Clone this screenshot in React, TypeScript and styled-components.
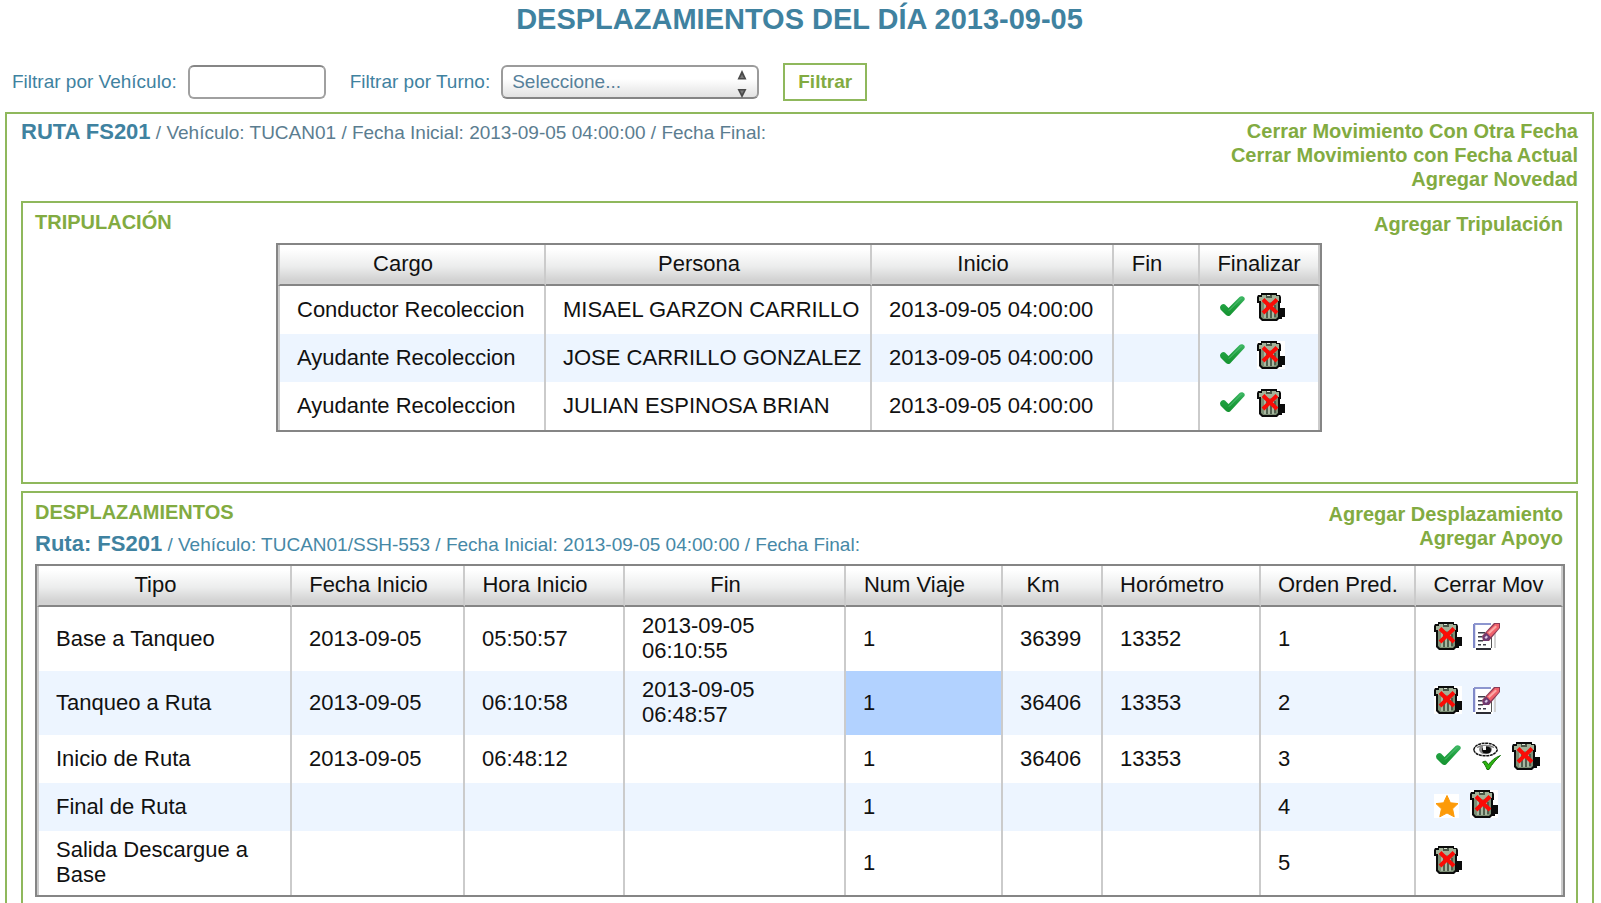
import React from "react";
import styled, { createGlobalStyle, css } from "styled-components";

const GREEN = "#82ab41";
const BLUE = "#3f82a0";

const GlobalStyle = createGlobalStyle`
  * { box-sizing: border-box; }
  html { scrollbar-width: none; }
  body {
    margin: 0;
    background: #fff;
    font-family: "Liberation Sans", Arial, Helvetica, sans-serif;
  }
`;

const Page = styled.main`
  padding: 2px 7px 16px 5px;
`;

const Title = styled.h1`
  margin: 0;
  color: ${BLUE};
  font-size: 29px;
  line-height: 34px;
  text-align: center;
`;

const Filters = styled.form`
  display: flex;
  align-items: center;
  gap: 24px;
  margin: 27px 0 11px;
  padding-left: 7px;
  color: ${BLUE};
  font-size: 19px;
  line-height: 24px;
`;

const Field = styled.div`
  display: flex;
  align-items: center;
  gap: 11px;
`;

const TextInput = styled.input`
  width: 138px;
  height: 34px;
  padding: 0 8px;
  border: 2px solid #a0a0a0;
  border-top-color: #868686;
  border-radius: 6px;
  background: #fff;
  color: #4f7d94;
  font: inherit;
`;

const SelectWrap = styled.div`
  position: relative;
  display: flex;
`;

const Select = styled.select`
  appearance: none;
  width: 258px;
  height: 34px;
  padding: 0 32px 0 9px;
  border: 2px solid #9b9b9b;
  border-bottom-color: #858585;
  border-radius: 6px;
  background: linear-gradient(#fff 40%, #e2e2e2);
  color: #56809a;
  font: inherit;
`;

const SelectArrows = styled.svg`
  position: absolute;
  top: 5px;
  right: 12px;
  pointer-events: none;
`;

const FilterButton = styled.button`
  width: 84px;
  height: 38px;
  padding: 0;
  border: 2px solid #8fb85c;
  background: #fff;
  color: ${GREEN};
  font: inherit;
  font-weight: bold;
`;

const frame = css`
  border: 2px solid #8fb85c;
`;

const RoutePanel = styled.section`
  ${frame}
  padding: 5px 14px 12px 14px;
`;

const Panel = styled.section<{ $bottom: number }>`
  ${frame}
  padding: 7px 13px ${(p) => p.$bottom}px 12px;
  & + & {
    margin-top: 7px;
  }
`;

const PanelHeader = styled.header<{ $gap: number }>`
  display: flex;
  justify-content: space-between;
  align-items: flex-start;
  margin-bottom: ${(p) => p.$gap}px;
`;

const PanelTitle = styled.h2`
  margin: 0;
  color: ${GREEN};
  font-size: 20px;
  line-height: 24px;
`;

const RouteLine = styled.p<{ $muted?: boolean; $top?: number }>`
  margin: ${(p) => p.$top ?? 0}px 0 0;
  color: ${(p) => (p.$muted ? "#5b7d90" : "#4688a6")};
  font-size: 19px;
  line-height: 26px;
  strong {
    color: ${BLUE};
    font-size: 22px;
  }
`;

const Actions = styled.nav<{ $top?: number }>`
  display: flex;
  flex-direction: column;
  align-items: flex-end;
  padding-top: ${(p) => p.$top ?? 0}px;
`;

const ActionLink = styled.a`
  color: ${GREEN};
  font-size: 20px;
  font-weight: bold;
  line-height: 24px;
  text-decoration: none;
`;

const Table = styled.table<{ $width?: number }>`
  width: ${(p) => (p.$width ? `${p.$width}px` : "100%")};
  max-width: 100%;
  margin: 0 auto;
  table-layout: fixed;
  border: 2px solid #858585;
  border-collapse: separate;
  border-spacing: 0;
  color: #111;
  font-size: 22px;
  line-height: 25px;
`;

const HeadCell = styled.th<{ $sortable: boolean }>`
  height: 41px;
  padding: 0 ${(p) => (p.$sortable ? 35 : 17)}px 2px 17px;
  border-right: 2px solid #cbcbcb;
  border-bottom: 2px solid #858585;
  background: linear-gradient(#fff 10%, #eceded 55%, #d2d2d2 90%);
  font-weight: normal;
  white-space: nowrap;
  text-align: center;
  &:first-child {
    border-left: 2px solid #cbcbcb;
  }
`;

const Row = styled.tr`
  background: #fff;
  &:nth-child(even) {
    background: #edf5ff;
  }
`;

const Cell = styled.td<{ $selected?: boolean }>`
  height: 48px;
  padding: 6px 0 8px 17px;
  border-right: 2px solid #cbcbcb;
  vertical-align: middle;
  white-space: nowrap;
  background: ${(p) => (p.$selected ? "#b2d2ff" : "transparent")};
  &:first-child {
    border-left: 2px solid #cbcbcb;
  }
`;

const IconCell = styled(Cell)`
  padding: 0 0 6px 18px;
`;

const IconRow = styled.div`
  display: flex;
  align-items: flex-end;
  gap: 11px;
`;

const IconButton = styled.button`
  display: block;
  padding: 0;
  border: 0;
  background: none;
  svg {
    display: block;
  }
`;

const TrashIcon = () => (
  <svg width="28" height="28" viewBox="0 0 28 28">
    <rect width="28" height="28" fill="#fff" />
    <path d="M21 15h7v9h-3v2h-4z" fill="#0b0b0b" />
    <path d="M2 7h21v18l-3 3H5l-3-3z" fill="#0b0b0b" />
    <path d="M4 8h17v16l-2 2H6l-2-2z" fill="#7d8f75" />
    <path d="M7 11h2v14H7zM11 11h2v14h-2zM15 11h2v14h-2z" fill="#a9b8a1" />
    <path d="M9.500 12h1v13h-1zM13.500 12h1v13h-1zM17.500 12h1v12h-1z" fill="#27332a" />
    <path d="M4 0h16v2h3l1 2v6h-3V8H3v2H0V4l1-2h3z" fill="#0b0b0b" />
    <path d="M5 2h14v1h3v5h-2v1H4V8H2V4h3z" fill="#a3b298" />
    <path d="M9 2h6v3H9z" fill="#4a5747" />
    <path d="M10 2h3v1h-3z" fill="#dde4d6" />
    <path d="M6 6.500L20 20M20 6.500L6 20" stroke="#fb0b06" strokeWidth="4" />
  </svg>
);

const CheckIcon = () => (
  <svg width="28" height="28" viewBox="0 0 28 28">
    <defs>
      <linearGradient id="tick" x1="0" y1="0" x2="0" y2="1">
        <stop offset="0" stopColor="#3fb866" />
        <stop offset="0.5" stopColor="#1fa03f" />
        <stop offset="1" stopColor="#169331" />
      </linearGradient>
    </defs>
    <path
      d="M2 14.500C2 12 5.500 10 7 11.500l3.500 3.500L21.500 4c2-2 6.500 0 5 3L13 21.500c-1.500 2-3.500 2-5 .5L2.500 16.500z"
      fill="url(#tick)"
    />
    <path d="M11 17.500L23.500 5" stroke="#55c078" strokeWidth="1" fill="none" />
  </svg>
);

const EditIcon = () => (
  <svg width="28" height="28" viewBox="0 0 28 28">
    <path d="M0 1h20v27H0z" fill="#fff" />
    <path d="M0 2h2v24H0z" fill="#7f88c8" />
    <path d="M1 1h17v2H1z" fill="#8d96cf" />
    <path d="M2 3h1v23H2z" fill="#dfe2f3" />
    <path d="M18 14h1v12h-1z" fill="#555" />
    <path d="M21 8h2v18h-2z" fill="#d2d2d2" />
    <path d="M3 26h15v2H3z" fill="#2c2c34" />
    <path d="M5 10h7v1.500H5zM5 14h4v1.500H5zM5 18h5v1.500H5zM5 22h3v1.500H5zM10 22h3v1.500h-3z" fill="#3d3d4a" />
    <path d="M9 14L21 1h6v5L16 19h-6z" fill="#8b3a55" />
    <path d="M13.500 10.500L22 2h4v4l-8.500 9z" fill="#f0616b" />
    <path d="M15 10.500l7.500-7 1.500 1.500-7.500 7z" fill="#fba9a6" />
    <path d="M9.500 15l3.500-4 5 4.500-3 3.500h-4z" fill="#6d3a72" />
    <path d="M11.500 15.500l2-2 1.500 1.500-2 2z" fill="#d9c8e4" />
  </svg>
);

const EyeCheckIcon = () => (
  <svg width="28" height="28" viewBox="0 0 28 28">
    <path d="M.8 8C1.500 3 7 1.200 12.500 1.200S23.500 3 24.200 8C23 12 18 13.800 12.500 13.800S2 12 .8 8z" fill="#fff" stroke="#111" strokeWidth="1.500" strokeDasharray="3 .6" />
    <path d="M4 5.500C8 2.800 17 2.800 21 5.500" stroke="#777" strokeWidth="1.500" fill="none" />
    <ellipse cx="12.500" cy="7.500" rx="6.500" ry="4.800" fill="#8b8b8b" />
    <ellipse cx="13.500" cy="8" rx="4.500" ry="3.500" fill="#0a0a0a" />
    <path d="M10 4h3v4h-3z" fill="#f5f5f5" />
    <path d="M9.500 20l3-1 3 3.500C18 19 22 15.500 27.500 13.500 23 17.500 19 22 16 27.500h-2C13 24.500 11.500 22 9.500 20z" fill="#2cb510" stroke="#15720a" strokeWidth="1" />
  </svg>
);

const StarIcon = () => (
  <svg width="25" height="24" viewBox="0 0 25 24">
    <rect width="25" height="24" fill="#fff" />
    <path
      d="M13 1.500l3.400 7.300 7.600.8-5.400 5.200 1.600 8L13 19l-7.200 3.800 1.600-8L2 9.600l7.600-.8z"
      fill="#fd9a08"
      stroke="#fd9a08"
      strokeLinejoin="round"
    />
  </svg>
);

const icons = {
  check: { label: "Finalizar", Icon: CheckIcon },
  trash: { label: "Eliminar", Icon: TrashIcon },
  edit: { label: "Editar", Icon: EditIcon },
  review: { label: "Revisar", Icon: EyeCheckIcon },
  star: { label: "Destacar", Icon: StarIcon },
};

type IconName = keyof typeof icons;

const IconActions = ({ names }: { names: IconName[] }) => (
  <IconRow>
    {names.map((name) => {
      const { label, Icon } = icons[name];
      return (
        <IconButton key={name} type="button" aria-label={label}>
          <Icon />
        </IconButton>
      );
    })}
  </IconRow>
);

type Column = { label: string; width: number };
type DataRow = { cells: string[]; actions: IconName[] };

const crewColumns: Column[] = [
  { label: "Cargo", width: 268 },
  { label: "Persona", width: 326 },
  { label: "Inicio", width: 242 },
  { label: "Fin", width: 86 },
  { label: "Finalizar", width: 120 },
];

const crewRows: DataRow[] = [
  { cells: ["Conductor Recoleccion", "MISAEL GARZON CARRILLO", "2013-09-05 04:00:00", ""], actions: ["check", "trash"] },
  { cells: ["Ayudante Recoleccion", "JOSE CARRILLO GONZALEZ", "2013-09-05 04:00:00", ""], actions: ["check", "trash"] },
  { cells: ["Ayudante Recoleccion", "JULIAN ESPINOSA BRIAN", "2013-09-05 04:00:00", ""], actions: ["check", "trash"] },
];

const tripColumns: Column[] = [
  { label: "Tipo", width: 255 },
  { label: "Fecha Inicio", width: 173 },
  { label: "Hora Inicio", width: 160 },
  { label: "Fin", width: 221 },
  { label: "Num Viaje", width: 157 },
  { label: "Km", width: 100 },
  { label: "Horómetro", width: 158 },
  { label: "Orden Pred.", width: 155 },
  { label: "Cerrar Mov", width: 147 },
];

const tripRows: DataRow[] = [
  { cells: ["Base a Tanqueo", "2013-09-05", "05:50:57", "2013-09-05\n06:10:55", "1", "36399", "13352", "1"], actions: ["trash", "edit"] },
  { cells: ["Tanqueo a Ruta", "2013-09-05", "06:10:58", "2013-09-05\n06:48:57", "1", "36406", "13353", "2"], actions: ["trash", "edit"] },
  { cells: ["Inicio de Ruta", "2013-09-05", "06:48:12", "", "1", "36406", "13353", "3"], actions: ["check", "review", "trash"] },
  { cells: ["Final de Ruta", "", "", "", "1", "", "", "4"], actions: ["star", "trash"] },
  { cells: ["Salida Descargue a\nBase", "", "", "", "1", "", "", "5"], actions: ["trash"] },
];

const Lines = ({ text }: { text: string }) => (
  <>
    {text.split("\n").map((line, i) => (
      <React.Fragment key={i}>
        {i > 0 && <br />}
        {line}
      </React.Fragment>
    ))}
  </>
);

type DataTableProps = {
  columns: Column[];
  rows: DataRow[];
  width?: number;
  selected?: [number, number];
};

const DataTable = ({ columns, rows, width, selected }: DataTableProps) => (
  <Table $width={width}>
    <colgroup>
      {columns.map((c) => (
        <col key={c.label} width={c.width} />
      ))}
    </colgroup>
    <thead>
      <tr>
        {columns.map((c, i) => (
          <HeadCell key={c.label} scope="col" $sortable={i < columns.length - 1}>
            {c.label}
          </HeadCell>
        ))}
      </tr>
    </thead>
    <tbody>
      {rows.map((row, r) => (
        <Row key={r}>
          {row.cells.map((text, c) => (
            <Cell key={c} $selected={selected?.[0] === r && selected?.[1] === c}>
              <Lines text={text} />
            </Cell>
          ))}
          <IconCell>
            <IconActions names={row.actions} />
          </IconCell>
        </Row>
      ))}
    </tbody>
  </Table>
);

export default function App() {
  return (
    <>
      <GlobalStyle />
      <Page>
        <Title>DESPLAZAMIENTOS DEL DÍA 2013-09-05</Title>
        <Filters onSubmit={(e) => e.preventDefault()}>
          <Field>
            <label htmlFor="vehiculo">Filtrar por Vehículo:</label>
            <TextInput id="vehiculo" type="text" />
          </Field>
          <Field>
            <label htmlFor="turno">Filtrar por Turno:</label>
            <SelectWrap>
              <Select id="turno">
                <option>Seleccione...</option>
              </Select>
              <SelectArrows width="10" height="28" viewBox="0 0 10 28">
                <path d="M5 0l4.500 9.500h-9z" fill="#4a4a4a" />
                <path d="M5 28L.5 19h9z" fill="#4a4a4a" />
                <path d="M5 4.500l2 3.500H3zM5 24l-2-3.500h4z" fill="#7a7a7a" />
              </SelectArrows>
            </SelectWrap>
          </Field>
          <FilterButton type="submit">Filtrar</FilterButton>
        </Filters>

        <RoutePanel>
          <PanelHeader $gap={10}>
            <RouteLine $muted>
              <strong>RUTA FS201</strong> / Vehículo: TUCAN01 / Fecha Inicial: 2013-09-05 04:00:00 / Fecha Final:
            </RouteLine>
            <Actions>
              <ActionLink href="#cerrar-otra">Cerrar Movimiento Con Otra Fecha</ActionLink>
              <ActionLink href="#cerrar-actual">Cerrar Movimiento con Fecha Actual</ActionLink>
              <ActionLink href="#novedad">Agregar Novedad</ActionLink>
            </Actions>
          </PanelHeader>

          <Panel $bottom={50}>
            <PanelHeader $gap={7}>
              <PanelTitle>TRIPULACIÓN</PanelTitle>
              <Actions $top={2}>
                <ActionLink href="#tripulacion">Agregar Tripulación</ActionLink>
              </Actions>
            </PanelHeader>
            <DataTable columns={crewColumns} rows={crewRows} width={1045} />
          </Panel>

          <Panel $bottom={12}>
            <PanelHeader $gap={6}>
              <div>
                <PanelTitle>DESPLAZAMIENTOS</PanelTitle>
                <RouteLine $top={7}>
                  <strong>Ruta: FS201</strong> / Vehículo: TUCAN01/SSH-553 / Fecha Inicial: 2013-09-05 04:00:00 / Fecha Final:
                </RouteLine>
              </div>
              <Actions $top={2}>
                <ActionLink href="#desplazamiento">Agregar Desplazamiento</ActionLink>
                <ActionLink href="#apoyo">Agregar Apoyo</ActionLink>
              </Actions>
            </PanelHeader>
            <DataTable columns={tripColumns} rows={tripRows} selected={[1, 4]} />
          </Panel>
        </RoutePanel>
      </Page>
    </>
  );
}
